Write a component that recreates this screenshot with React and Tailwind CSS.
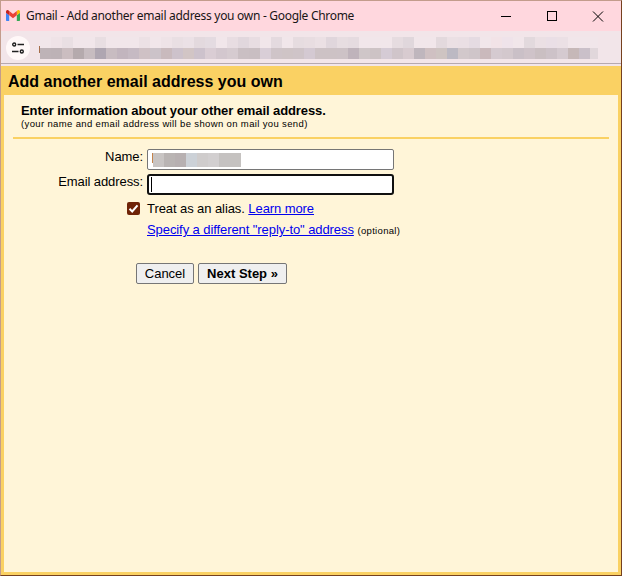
import React, { useState } from "react";

// blurred url cells, 11px each
const URL_TOP = [
  "#f1e6ea", "#efe3e7", "#e9dfe3", "#f1e6ea", "#f1e6ea", "#e8dee2", "#f1e6ea", "#f1e6ea", "#f1e6ea", "#ece1e5",
  "#f1e6ea", "#eee3e7", "#e9dfe3", "#ebe1e6", "#e3d9de", "#e4dbe1", "#f1e6ea", "#e8dde2", "#e1d7dd", "#e8dde2",
  "#f1e6ea", "#e4dadf", "#f1e6ea", "#e6dce0", "#e8dde1", "#ebe0e4", "#e0d6dc", "#e7dde1", "#e5dbe0", "#f1e6ea",
  "#f1e6ea", "#f1e6ea", "#e6dce0", "#e0d7dc", "#f1e6ea", "#f1e6ea", "#e3d9dd", "#ebe0e4", "#eadfe4", "#e5dbe2",
  "#f1e6ea", "#f2e3e7", "#efe3ea", "#f1e6ea", "#e2d9dd", "#ebe0e4", "#eadfe6", "#ebe0e5", "#f1e6ea", "#f1e6ea", "#f1e6ea",
];
const URL_BOTTOM = [
  "#beb3b7", "#bdb2b6", "#cbbdc0", "#b5aaad", "#c7bcc0", "#afa6b1", "#c8bcc1", "#c2b5be", "#c6bac3", "#cfc1c5",
  "#ccc3c9", "#c9babd", "#cdc2cb", "#d2c5c5", "#cdc2cc", "#dacdd4", "#d3c7ce", "#d6cbd0", "#cabfc3", "#c9bec2",
  "#d9ced7", "#cfc4c8", "#cfc4c6", "#cfc4c8", "#d4c9d2", "#cdc2c5", "#cdc2c5", "#cdc2c6", "#bfb3bb", "#cfc6c8",
  "#cdc3c5", "#d5cbd5", "#d0c5ca", "#d8cbd0", "#bfb6bd", "#cfc0c2", "#cec4c2", "#bcb9c3", "#d2c8cb", "#cfc5c9",
  "#cab9bc", "#d5cad0", "#d3c8cd", "#cac0c7", "#cfc3c9", "#cabfc2", "#cdc2c8", "#d5cad0", "#c6b8b8", "#cac0c9", "#e1d7db",
];
const NAME_CELLS = ["#c8c4c3", "#b9b4b3", "#b7b0b1", "#ccd1d7", "#cfcccc", "#d2cfd0", "#c5c2c1", "#c5c2c0"];

const GmailIcon = () => (
  <svg viewBox="52 42 88 66" preserveAspectRatio="none" className="w-[14px] h-[11px] -mt-px">
    <path fill="#4285f4" d="M58 108h14V74L52 59v43c0 3.32 2.69 6 6 6" />
    <path fill="#34a853" d="M120 108h14c3.32 0 6-2.69 6-6V59l-20 15" />
    <path fill="#fbbc04" d="M120 48v26l20-15v-8c0-7.42-8.47-11.65-14.4-7.2" />
    <path fill="#ea4335" d="M72 74V48l24 18 24-18v26L96 92" />
    <path fill="#c5221f" d="M52 51v8l20 15V48l-5.6-4.2c-5.94-4.45-14.4-.22-14.4 7.2" />
  </svg>
);

const TuneIcon = () => (
  <svg viewBox="0 0 12 12" className="w-3 h-3" fill="none" stroke="#202020" strokeWidth="1.4">
    <circle cx="2.2" cy="2.5" r="1.5" />
    <path d="M5.5 2.5H12M0 9.5h6.5" />
    <circle cx="9.8" cy="9.5" r="1.5" />
  </svg>
);

const TitleBar = () => (
  <div className="h-[30px] bg-[#ffd7de] flex items-center pl-[5px] font-['Noto_Sans','Open_Sans',sans-serif]">
    <GmailIcon />
    <span className="ml-[6px] text-[12px] leading-[30px] whitespace-nowrap text-[#191516] w-[330px] tracking-[-0.29px]">
      Gmail - Add another email address you own - Google Chrome
    </span>
    <svg viewBox="0 0 106 11" className="w-[106px] h-[11px] ml-[145px]" fill="none" stroke="#000">
      <path d="M0 5.5h10" shapeRendering="crispEdges" />
      <path d="M46.5.5h9v9h-9z" shapeRendering="crispEdges" />
      <path d="M92 .5l10 10M102 .5l-10 10" />
    </svg>
  </div>
);

const AddressBar = () => (
  <div className="h-[35px] bg-[#f2e5e9]">
    <div className="h-[33px] border-b border-[#b6a9af] flex pl-[5px]">
      <div className="w-6 h-6 mt-[5px] rounded-full bg-[#fff8f8] flex items-center justify-center shrink-0">
        <TuneIcon />
      </div>
      <div className="w-px h-[7px] bg-[#a66f4c] mt-[15px] ml-[9px]" />
      <div className="mt-[6px] w-[558px] overflow-hidden">
        {[URL_TOP, URL_BOTTOM].map((row, r) => (
          <div key={r} className="flex">
            {row.map((color, i) => (
              <div key={i} className="w-[11px] h-[11px] shrink-0" style={{ backgroundColor: color }} />
            ))}
          </div>
        ))}
      </div>
    </div>
  </div>
);

const App = () => {
  const [name, setName] = useState("");
  const [email, setEmail] = useState("");
  const [alias, setAlias] = useState(true);

  return (
    <div className="w-[622px] h-[576px] flex flex-col overflow-hidden border border-t-[#c39c8c] border-l-[#c39c8c] border-r-[#75401f] border-b-[#75401f] bg-[#fad163] text-black font-['Liberation_Sans',Arial,sans-serif]">
      <TitleBar />
      <AddressBar />

      <h1 className="h-[29px] pl-[7px] text-[16px] leading-[32px] font-bold">Add another email address you own</h1>

      <div className="flex-1 mx-[3px] mb-[3px] bg-[#fff5d8] pt-[8px]">
        {/* HEADING */}
        <div className="mx-[9px] pl-2 h-[36px] border-b-2 border-[#fad163]">
          <h2 className="text-[13px] leading-[15px] font-bold tracking-[-0.09px]">
            Enter information about your other email address.
          </h2>
          <p className="text-[9.5px] leading-[11px] tracking-[0.36px]">
            (your name and email address will be shown on mail you send)
          </p>
        </div>

        {/* FORM */}
        <form className="pt-[10px] text-[13px]" onSubmit={(e) => e.preventDefault()}>
          <div className="flex h-[25px]">
            <label className="w-[139px] text-right leading-[16px] shrink-0 tracking-[-0.08px]">Name:</label>
            <div className="relative ml-1 w-[247px] h-[21px]">
              <input
                value={name}
                onChange={(e) => setName(e.target.value)}
                className="block w-full h-full bg-white border border-[#767676] rounded-[2px] outline-none px-1"
              />
              <div className="absolute left-[5px] top-[4px] flex pointer-events-none">
                <div className="w-px h-[10px] bg-[#c4834b]" />
                {NAME_CELLS.map((color, i) => (
                  <div key={i} className="w-[11px] h-[14px]" style={{ backgroundColor: color }} />
                ))}
              </div>
            </div>
          </div>
          <div className="flex h-[26px]">
            <label className="w-[139px] text-right leading-[16px] shrink-0 tracking-[-0.08px]">Email address:</label>
            <div className="relative ml-1 w-[247px] h-[21px]">
              <input
                value={email}
                onChange={(e) => setEmail(e.target.value)}
                className="block w-full h-full bg-white border-2 border-[#101010] rounded-[3px] outline-none px-1"
              />
              <div className="absolute left-1 top-[3px] w-px h-[15px] bg-black" />
            </div>
          </div>
          <div className="flex h-[21px] pl-[123px]">
            <button
              type="button"
              onClick={() => setAlias(!alias)}
              className="w-[13px] h-[13px] mt-[2px] rounded-[2px] bg-[#6f2307] flex items-center justify-center"
            >
              {alias && (
                <svg viewBox="0 0 13 13" className="w-[13px] h-[13px]" fill="none" stroke="#fff" strokeWidth="2">
                  <path d="M2.5 6.8l2.7 2.7 5.3-6.2" />
                </svg>
              )}
            </button>
            <span className="ml-[7px] leading-[18px] whitespace-pre tracking-[-0.08px]">
              Treat as an alias. <a href="#" className="text-[#0000ee] underline">Learn more</a>
            </span>
          </div>
          <div className="pl-[143px] pt-px leading-[16px] whitespace-nowrap">
            <a href="#" className="text-[#0000ee] underline tracking-[-0.08px]">Specify a different "reply-to" address</a>{" "}
            <span className="text-[9.5px] tracking-[0.32px]">(optional)</span>
          </div>
          <div className="flex gap-1 pl-[132px] pt-6">
            <button type="button" className="w-[58px] h-[21px] border border-[#767676] rounded-[2px] bg-[#efefef] leading-[19px]">
              Cancel
            </button>
            <button type="submit" className="w-[89px] h-[21px] border border-[#767676] rounded-[2px] bg-[#efefef] leading-[19px] font-bold">
              Next Step »
            </button>
          </div>
        </form>
      </div>
    </div>
  );
};

export default App;
